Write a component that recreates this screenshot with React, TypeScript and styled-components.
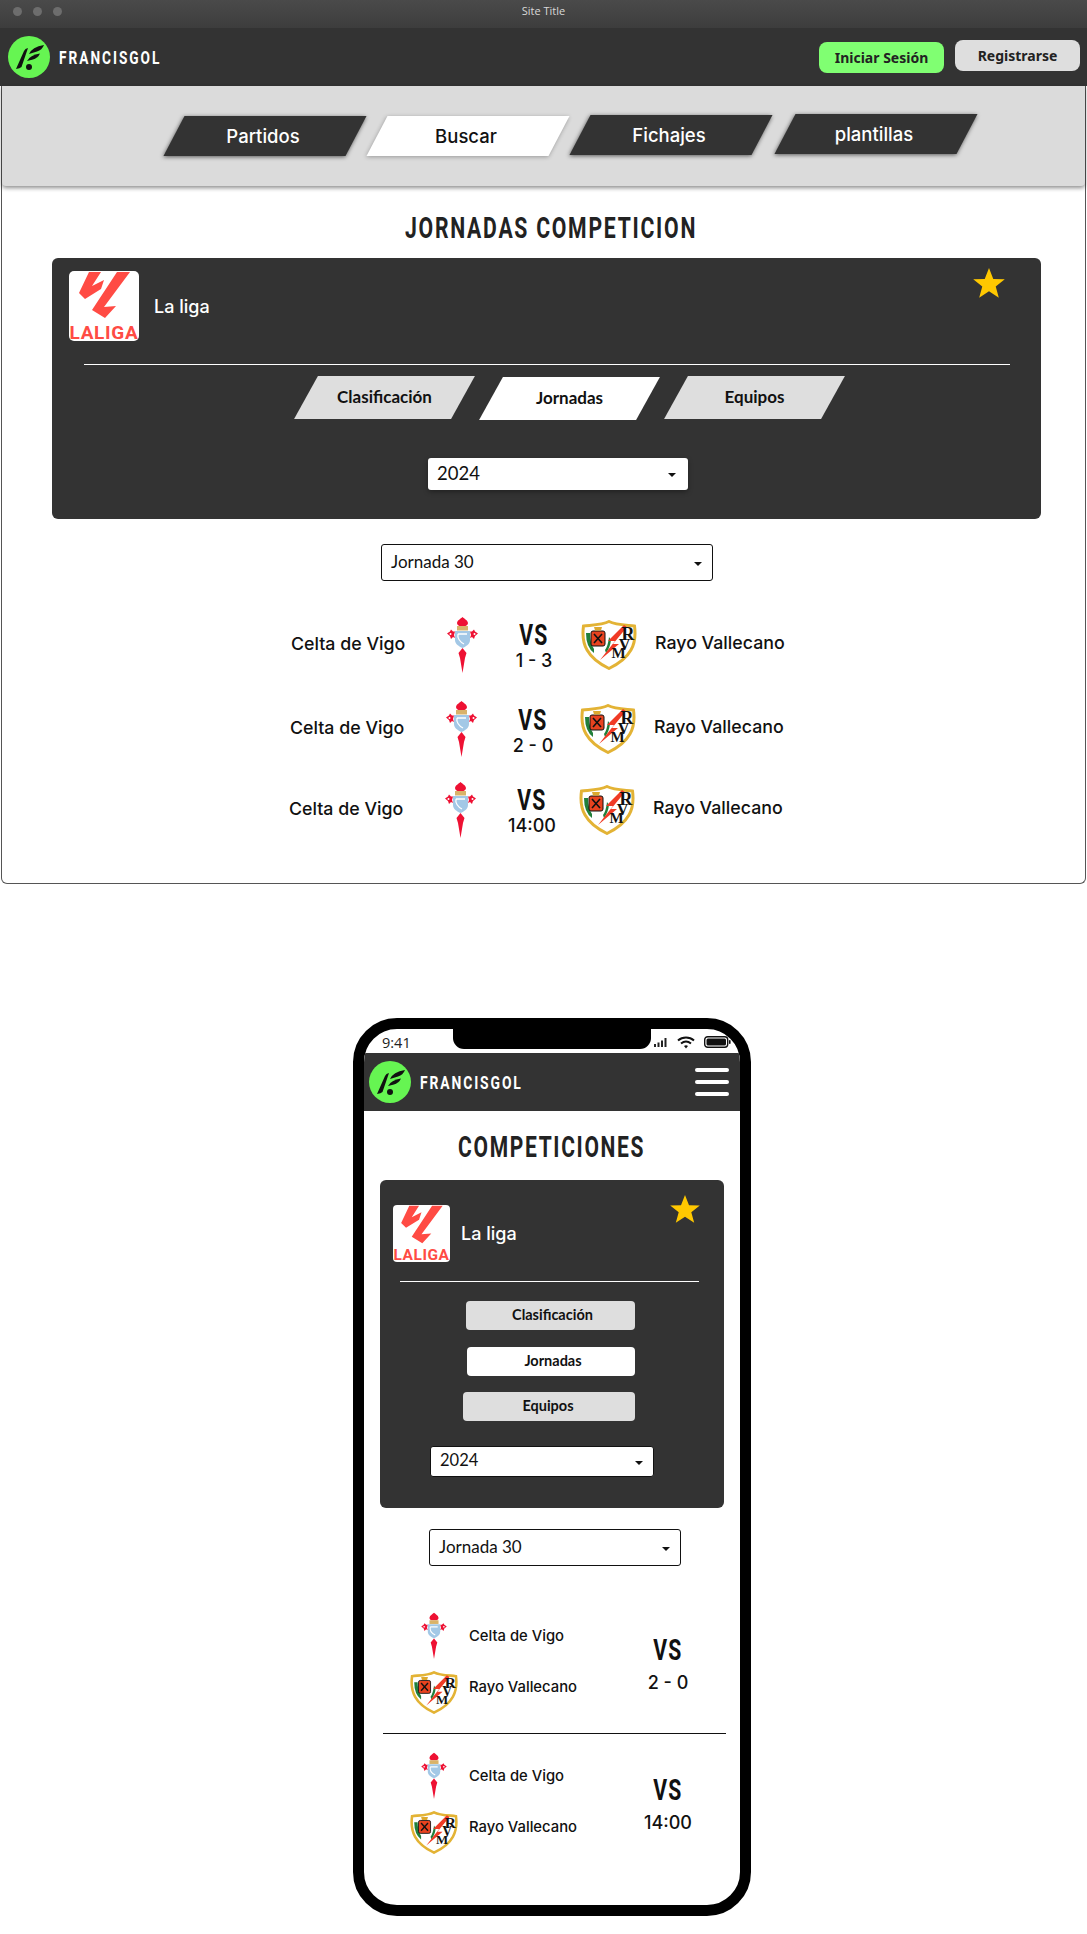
import React from "react";
import styled, { createGlobalStyle } from "styled-components";

const Global = createGlobalStyle`
  html, body { margin: 0; padding: 0; background: #fff; }
  * { box-sizing: border-box; }
  body { font-family: Inter, "Noto Sans", sans-serif; color: #111; }
`;

const narrow = `Roboto, "Liberation Sans", sans-serif`;
const humanist = `Lato, "Open Sans", sans-serif`;

const Page = styled.div`
  width: 1087px;
  height: 1934px;
  overflow: hidden;
`;

const TitleBar = styled.div`
  height: 28px;
  display: flex;
  align-items: center;
  position: relative;
  padding: 0 0 6px 13px;
  gap: 11px;
  background: linear-gradient(#4a4a4a, #3d3d3d);
`;
const Dot = styled.span`
  width: 9px;
  height: 9px;
  border-radius: 50%;
  background: #6d6d6d;
`;
const SiteTitle = styled.span`
  position: absolute;
  left: 0;
  right: 0;
  top: 3px;
  text-align: center;
  font: 400 11px "Open Sans", sans-serif;
  color: #d8d8d8;
`;
const TopBar = styled.header<{ $h: number; $pl: number }>`
  height: ${(p) => p.$h}px;
  background: #333;
  display: flex;
  align-items: center;
  justify-content: space-between;
  padding-left: ${(p) => p.$pl}px;
`;
const Brand = styled.div`
  display: flex;
  align-items: center;
  gap: 9px;
`;
const BrandName = styled.span<{ $size: number; $sx: number }>`
  display: inline-block;
  font: 700 ${(p) => p.$size}px ${narrow};
  letter-spacing: 2.6px;
  color: #fff;
  transform: scaleX(${(p) => p.$sx});
  transform-origin: left center;
`;
const AuthGroup = styled.div`
  display: flex;
  gap: 11px;
  padding-right: 7px;
`;
const AuthButton = styled.div<{ $bg: string; $up?: number }>`
  width: 125px;
  height: 31px;
  margin-top: ${(p) => (p.$up ? -p.$up * 2 : 0)}px;
  border-radius: 8px;
  background: ${(p) => p.$bg};
  display: flex;
  align-items: center;
  justify-content: center;
  font: 700 14px "Noto Sans", sans-serif;
  color: #222;
`;

const Frame = styled.main`
  margin: 0 1px;
  height: 798px;
  border: 1px solid #555;
  border-top: 0;
  border-radius: 0 0 6px 6px;
`;
const SubNav = styled.nav`
  height: 100px;
  background: #dbdbdb;
  box-shadow: 0 2px 4px rgba(0, 0, 0, 0.45);
  border-radius: 0 0 4px 4px;
  display: flex;
  align-items: flex-start;
  padding: 30px 0 0 172px;
`;
const MainTab = styled.div<{ $active?: boolean; $top: number; $gap?: number }>`
  position: relative;
  z-index: 0;
  width: 182px;
  height: 40px;
  margin-top: ${(p) => p.$top}px;
  margin-right: ${(p) => p.$gap ?? 21}px;
  padding-right: 4px;
  display: flex;
  align-items: center;
  justify-content: center;
  font: 500 18.5px Inter, sans-serif;
  color: ${(p) => (p.$active ? "#111" : "#fff")};
  &::before {
    content: "";
    position: absolute;
    inset: 0;
    z-index: -1;
    transform: skewX(-27.7deg);
    background: ${(p) => (p.$active ? "#fff" : "#333")};
    box-shadow: 0 1px 4px rgba(0, 0, 0, ${(p) => (p.$active ? 0.3 : 0.6)});
  }
`;
const Heading = styled.h1<{ $top: number; $bottom: number; $shift: number }>`
  margin: ${(p) => p.$top}px 0 ${(p) => p.$bottom}px ${(p) => p.$shift}px;
  text-align: center;
  height: 40px;
`;
const HeadingText = styled.span<{ $size: number; $sx: number }>`
  display: inline-block;
  font: 700 ${(p) => p.$size}px/40px ${narrow};
  letter-spacing: 2.4px;
  color: #222;
  transform: scaleX(${(p) => p.$sx});
`;
const LeaguePanel = styled.section`
  margin-left: 50px;
  width: 989px;
  height: 261px;
  background: #333;
  border-radius: 6px;
  padding-top: 13px;
`;
const LeagueHead = styled.div`
  display: flex;
  align-items: center;
  padding: 0 36px 0 17px;
  height: 70px;
`;
const LeagueName = styled.span<{ $ml: number }>`
  margin-left: ${(p) => p.$ml}px;
  font: 500 18px Inter, sans-serif;
  color: #fff;
`;
const StarSlot = styled.div<{ $up: number }>`
  margin-left: auto;
  margin-top: ${(p) => -p.$up}px;
  line-height: 0;
`;
const Rule = styled.hr<{ $color: string; $left: number; $right: number; $top: number }>`
  margin: ${(p) => p.$top}px ${(p) => p.$right}px 0 ${(p) => p.$left}px;
  border: 0;
  height: 1px;
  background: ${(p) => p.$color};
`;
const SubTabs = styled.div`
  display: flex;
  align-items: flex-start;
  padding: 11px 0 0 254px;
`;
const SubTab = styled.div<{ $active?: boolean; $top: number; $gap: number }>`
  position: relative;
  z-index: 0;
  width: 157px;
  height: 43px;
  margin-top: ${(p) => p.$top}px;
  margin-right: ${(p) => p.$gap}px;
  padding-bottom: 3px;
  display: flex;
  align-items: center;
  justify-content: center;
  font: 700 17px ${humanist};
  color: #111;
  &::before {
    content: "";
    position: absolute;
    inset: 0;
    z-index: -1;
    transform: skewX(-29deg);
    background: ${(p) => (p.$active ? "#fff" : "#dedede")};
  }
`;
const Select = styled.div<{ $w: number; $h: number; $ml: number; $mt: number; $size: number; $border?: boolean; $shadow?: boolean }>`
  width: ${(p) => p.$w}px;
  height: ${(p) => p.$h}px;
  margin: ${(p) => p.$mt}px 0 0 ${(p) => p.$ml}px;
  padding: 0 ${(p) => (p.$shadow ? 12 : 10)}px 3px 9px;
  background: #fff;
  border-radius: 3px;
  border: ${(p) => (p.$border ? "1px solid #111" : "0")};
  box-shadow: ${(p) => (p.$shadow ? "0 2px 5px rgba(0,0,0,.35)" : "none")};
  display: flex;
  align-items: center;
  justify-content: space-between;
  font: 400 ${(p) => p.$size}px ${humanist};
  color: #111;
  &::after {
    content: "";
    margin-top: 5px;
    border-left: 4.5px solid transparent;
    border-right: 4.5px solid transparent;
    border-top: 4.5px solid #111;
  }
`;

const MatchList = styled.div`
  margin: 35px 0 0 287px;
  display: flex;
  flex-direction: column;
`;
const MatchRow = styled.div<{ $shift: number; $gap: number }>`
  display: grid;
  grid-template-columns: 141px 60px 84px 4px 57px 18px auto;
  align-items: center;
  height: 57px;
  margin-left: ${(p) => p.$shift}px;
  margin-top: ${(p) => p.$gap}px;
`;
const TeamName = styled.span<{ $size: number; $lift: number; $col?: number }>`
  font: 550 ${(p) => p.$size}px Inter, sans-serif;
  margin-bottom: ${(p) => p.$lift}px;
  grid-column: ${(p) => p.$col ?? "auto"};
  color: #111;
  white-space: nowrap;
`;
const CrestCell = styled.div<{ $col?: number }>`
  display: flex;
  justify-content: center;
  line-height: 0;
  grid-column: ${(p) => p.$col ?? "auto"};
`;
const Versus = styled.div<{ $drop: number }>`
  display: flex;
  flex-direction: column;
  align-items: center;
  margin-top: ${(p) => p.$drop}px;
`;
const VsLabel = styled.span<{ $size: number; $h: number }>`
  display: inline-block;
  font: 700 ${(p) => p.$size}px/${(p) => p.$h}px ${narrow};
  letter-spacing: 1.5px;
  color: #111;
  transform: scaleX(0.73);
`;
const Score = styled.span<{ $size: number }>`
  font: 500 ${(p) => p.$size}px/20px Inter, sans-serif;
  color: #111;
`;

const Phone = styled.section`
  position: relative;
  margin: 134px 0 0 353px;
  width: 398px;
  height: 898px;
  border: 11px solid #000;
  border-radius: 44px;
  background: #fff;
  overflow: hidden;
`;
const Notch = styled.div`
  position: absolute;
  top: 0;
  left: 89px;
  width: 198px;
  height: 20px;
  background: #000;
  border-radius: 0 0 11px 11px;
`;
const StatusBar = styled.div`
  height: 24px;
  display: flex;
  align-items: center;
  justify-content: space-between;
  padding: 2px 9px 0 18px;
  font: 400 14.5px "Open Sans", sans-serif;
  color: #222;
`;
const StatusIcons = styled.div`
  display: flex;
  align-items: center;
  gap: 9px;
  line-height: 0;
`;
const Burger = styled.div`
  width: 34px;
  margin-right: 11px;
  display: flex;
  flex-direction: column;
  gap: 8px;
`;
const BurgerBar = styled.span`
  height: 4px;
  border-radius: 2px;
  background: #fff;
`;
const PhonePanel = styled.section`
  margin-left: 16px;
  width: 344px;
  height: 328px;
  background: #333;
  border-radius: 6px;
  padding-top: 25px;
`;
const PhoneLeagueHead = styled.div`
  display: flex;
  align-items: center;
  height: 57px;
  padding: 0 24px 0 13px;
`;
const StackButton = styled.div<{ $active?: boolean; $w: number; $mt: number; $pl: number; $pr: number }>`
  margin: ${(p) => p.$mt}px 89px 0 auto;
  width: ${(p) => p.$w}px;
  height: 29px;
  padding: 0 ${(p) => p.$pr}px 2px ${(p) => p.$pl}px;
  border-radius: 4px;
  background: ${(p) => (p.$active ? "#fff" : "#dedede")};
  display: flex;
  align-items: center;
  justify-content: center;
  font: 700 14.5px ${humanist};
  color: #111;
`;
const PhoneMatches = styled.div`
  margin-top: 46px;
`;
const PhoneMatch = styled.div<{ $mt: number }>`
  margin: ${(p) => p.$mt}px 0 19px 45px;
  display: grid;
  grid-template-columns: 50px 1fr 70px;
  column-gap: 10px;
  row-gap: 12px;
  align-items: center;
  width: 294px;
`;
const PhoneVersus = styled.div`
  grid-column: 3;
  grid-row: 1 / span 2;
  display: flex;
  flex-direction: column;
  align-items: center;
  gap: 12px;
  margin-top: 6px;
`;

const Logo = ({ size }: { size: number }) => (
  <svg width={size} height={size} viewBox="0 0 42 42">
    <circle cx="21" cy="21" r="21" fill="#66f552" />
    <path d="M8 33 L16 15 Q17 12.5 20 12 L13.5 31 Q12 32.5 8 33Z" fill="#111" />
    <path d="M21 18 Q24 11 36 9 Q34 14 29 15.5 L21 18Z" fill="#111" />
    <path d="M19 25 Q22 19 32 17.5 Q30 22 25 23.5 L19 25Z" fill="#111" />
    <circle cx="21" cy="31" r="3" fill="#111" />
  </svg>
);

const LaLigaLogo = ({ size }: { size: number }) => (
  <svg width={size} height={size} viewBox="0 0 70 70">
    <rect width="70" height="70" rx="5" fill="#fff" />
    <path d="M20 1H32L23 15L35 9L32 18L16 28L10 22Z" fill="#ff4b44" />
    <path d="M48 1H61L35 36L47 35L36 47L23 39Z" fill="#ff4b44" />
    <text x="35" y="67.5" textAnchor="middle" letterSpacing=".7" fontFamily="Roboto, sans-serif" fontWeight="700" fontSize="19" fill="#ff4b44">LALIGA</text>
  </svg>
);

const Star = ({ size }: { size: number }) => (
  <svg width={size} height={size} viewBox="0 0 30 30">
    <path d="M15 1L19 11.2L29.8 11.6L21.3 18.3L24.2 28.8L15 22.8L5.8 28.8L8.7 18.3L.2 11.6L11 11.2Z" fill="#ffc800" />
  </svg>
);

const CeltaCrest = ({ w, h }: { w: number; h: number }) => (
  <svg width={w} height={h} viewBox="0 0 31 57">
    <path d="M15.5 1 C13.5 3 10.5 4 10 7 C10 9.5 12.5 10.5 15.5 10 C18.5 10.5 21 9.5 21 7 C20.5 4 17.5 3 15.5 1Z" fill="#ee1133" />
    <rect x="10" y="10" width="11" height="4.5" fill="#d9b36a" />
    <path d="M0 17.5L3 15.5L4 13.5L6 15.5L8 15.5L7 19L8 22L6 21L4 23L3 20Z" fill="#ee1133" />
    <path d="M31 17.5L28 15.5L27 13.5L25 15.5L23 15.5L24 19L23 22L25 21L27 23L28 20Z" fill="#ee1133" />
    <circle cx="3.5" cy="18" r="1" fill="#fff" />
    <circle cx="27.5" cy="18" r="1" fill="#fff" />
    <path d="M8 15H23V24C23 28 19 30.5 15.5 32C12 30.5 8 28 8 24Z" fill="#a3c8e6" />
    <path d="M11 18H20M11 18C10 22 13 26 17 28" stroke="#fff" strokeWidth="1.3" fill="none" />
    <path d="M15.5 32L19.5 37L18 42L15.5 57L13 42L11.5 37Z" fill="#ee1133" />
  </svg>
);

const RayoCrest = ({ w, h }: { w: number; h: number }) => (
  <svg width={w} height={h} viewBox="0 0 56 50">
    <path d="M2.5 6C11 5 21 5 28 1.5C35 5 45 5 53.5 6C56 24 50 38 28 48.5C6 38 0 24 2.5 6Z" fill="#fff" stroke="#e3b335" strokeWidth="3" />
    <path d="M5 13Q5 27 13 33L13 29Q9 23 9 13Z" fill="#217f3a" />
    <path d="M25 33Q29 28 30 20L28 17Q27 26 24 30Z" fill="#217f3a" />
    <rect x="10" y="11" width="14" height="15" rx="2" fill="#e8431f" stroke="#111" strokeWidth="1" />
    <path d="M13 7H21L20 10.5H14Z" fill="#dca92e" />
    <path d="M13 14L21 23M21 14L13 23" stroke="#111" strokeWidth="1.6" />
    <path d="M43 5L27 21L34 21L19 40L38 24L32 24L46 7Z" fill="#f03a25" />
    <text x="47" y="20" textAnchor="middle" fontFamily="'Liberation Serif', serif" fontWeight="700" fontSize="18" fill="#111">R</text>
    <text x="43.5" y="29.5" textAnchor="middle" fontFamily="'Liberation Serif', serif" fontWeight="700" fontSize="16" fill="#111">V</text>
    <text x="37.5" y="38" textAnchor="middle" fontFamily="'Liberation Serif', serif" fontWeight="700" fontSize="15" fill="#111">M</text>
  </svg>
);

const StatusGlyphs = () => (
  <StatusIcons>
    <svg width="14" height="9" viewBox="0 0 14 9">
      <rect x="0" y="6" width="2" height="3" fill="#222" />
      <rect x="3.5" y="4.5" width="2" height="4.5" fill="#222" />
      <rect x="7" y="2.5" width="2" height="6.5" fill="#222" />
      <rect x="10.5" y="0" width="2" height="9" fill="#222" />
    </svg>
    <svg width="18" height="13" viewBox="0 0 18 13">
      <path d="M1 4.5C5.5 .5 12.5 .5 17 4.5M4 7.5C7 5 11 5 14 7.5" stroke="#111" strokeWidth="2" fill="none" />
      <path d="M7 10Q9 8.5 11 10L9 12.5Z" fill="#111" />
    </svg>
    <svg width="27" height="12" viewBox="0 0 27 12">
      <rect x=".7" y=".7" width="23" height="10.6" rx="3" fill="none" stroke="#111" strokeWidth="1.4" />
      <rect x="2.5" y="2.5" width="19.5" height="7" rx="1.5" fill="#111" />
      <rect x="25" y="4" width="1.6" height="4" rx=".8" fill="#111" />
    </svg>
  </StatusIcons>
);

const rows = [
  { score: "1 - 3", shift: 2, gap: 0, drop: 0 },
  { score: "2 - 0", shift: 1, gap: 27, drop: 2 },
  { score: "14:00", shift: 0, gap: 24, drop: 1 },
];

export default function App() {
  return (
    <Page>
      <Global />
      <TitleBar>
        <Dot />
        <Dot />
        <Dot />
        <SiteTitle>Site Title</SiteTitle>
      </TitleBar>
      <TopBar $h={58} $pl={8}>
        <Brand>
          <Logo size={42} />
          <BrandName $size={18} $sx={0.76}>FRANCISGOL</BrandName>
        </Brand>
        <AuthGroup>
          <AuthButton $bg="#80ff72">Iniciar Sesión</AuthButton>
          <AuthButton $bg="#dedede" $up={1}>Registrarse</AuthButton>
        </AuthGroup>
      </TopBar>
      <Frame>
        <SubNav>
          <MainTab $top={0}>Partidos</MainTab>
          <MainTab $top={0} $active>Buscar</MainTab>
          <MainTab $top={-1} $gap={23}>Fichajes</MainTab>
          <MainTab $top={-2}>plantillas</MainTab>
        </SubNav>
        <Heading $top={21} $bottom={11} $shift={16}>
          <HeadingText $size={29} $sx={0.73}>JORNADAS COMPETICION</HeadingText>
        </Heading>
        <LeaguePanel>
          <LeagueHead>
            <LaLigaLogo size={70} />
            <LeagueName $ml={15}>La liga</LeagueName>
            <StarSlot $up={46}><Star size={32} /></StarSlot>
          </LeagueHead>
          <Rule $color="#fff" $left={32} $right={31} $top={23} />
          <SubTabs>
            <SubTab $top={0} $gap={28}>Clasificación</SubTab>
            <SubTab $top={1} $gap={28} $active>Jornadas</SubTab>
            <SubTab $top={0} $gap={0}>Equipos</SubTab>
          </SubTabs>
          <Select $w={260} $h={32} $ml={376} $mt={38} $size={18.5} $shadow>2024</Select>
        </LeaguePanel>
        <Select $w={332} $h={37} $ml={379} $mt={25} $size={17} $border>Jornada 30</Select>
        <MatchList>
          {rows.map((r) => (
            <MatchRow key={r.score} $shift={r.shift} $gap={r.gap}>
              <TeamName $size={17.8} $lift={2}>Celta de Vigo</TeamName>
              <CrestCell><CeltaCrest w={31} h={57} /></CrestCell>
              <Versus $drop={r.drop}>
                <VsLabel $size={29} $h={32}>VS</VsLabel>
                <Score $size={18}>{r.score}</Score>
              </Versus>
              <CrestCell $col={5}><RayoCrest w={56} h={50} /></CrestCell>
              <TeamName $size={17.8} $lift={4} $col={7}>Rayo Vallecano</TeamName>
            </MatchRow>
          ))}
        </MatchList>
      </Frame>
      <Phone>
        <Notch />
        <StatusBar>
          <span>9:41</span>
          <StatusGlyphs />
        </StatusBar>
        <TopBar $h={58} $pl={5}>
          <Brand>
            <Logo size={42} />
            <BrandName $size={19} $sx={0.73}>FRANCISGOL</BrandName>
          </Brand>
          <Burger>
            <BurgerBar />
            <BurgerBar />
            <BurgerBar />
          </Burger>
        </TopBar>
        <Heading $top={15} $bottom={14} $shift={0}>
          <HeadingText $size={30} $sx={0.7}>COMPETICIONES</HeadingText>
        </Heading>
        <PhonePanel>
          <PhoneLeagueHead>
            <LaLigaLogo size={57} />
            <LeagueName $ml={11}>La liga</LeagueName>
            <StarSlot $up={50}><Star size={30} /></StarSlot>
          </PhoneLeagueHead>
          <Rule $color="#fff" $left={20} $right={25} $top={19} />
          <StackButton $w={169} $mt={19} $pl={4} $pr={0}>Clasificación</StackButton>
          <StackButton $w={168} $mt={17} $pl={4} $pr={0} $active>Jornadas</StackButton>
          <StackButton $w={172} $mt={16} $pl={0} $pr={2}>Equipos</StackButton>
          <Select $w={224} $h={31} $ml={50} $mt={25} $size={16.5} $border>2024</Select>
        </PhonePanel>
        <Select $w={252} $h={37} $ml={65} $mt={21} $size={17} $border>Jornada 30</Select>
        <PhoneMatches>
          {["2 - 0", "14:00"].map((score, i) => (
            <React.Fragment key={score}>
              {i > 0 && <Rule $color="#111" $left={19} $right={14} $top={0} />}
              <PhoneMatch $mt={i === 0 ? 0 : 18}>
                <CrestCell><CeltaCrest w={26} h={47} /></CrestCell>
                <TeamName $size={14.8} $lift={0}>Celta de Vigo</TeamName>
                <PhoneVersus>
                  <VsLabel $size={29} $h={22}>VS</VsLabel>
                  <Score $size={18}>{score}</Score>
                </PhoneVersus>
                <CrestCell><RayoCrest w={50} h={43} /></CrestCell>
                <TeamName $size={14.8} $lift={12}>Rayo Vallecano</TeamName>
              </PhoneMatch>
            </React.Fragment>
          ))}
        </PhoneMatches>
      </Phone>
    </Page>
  );
}
